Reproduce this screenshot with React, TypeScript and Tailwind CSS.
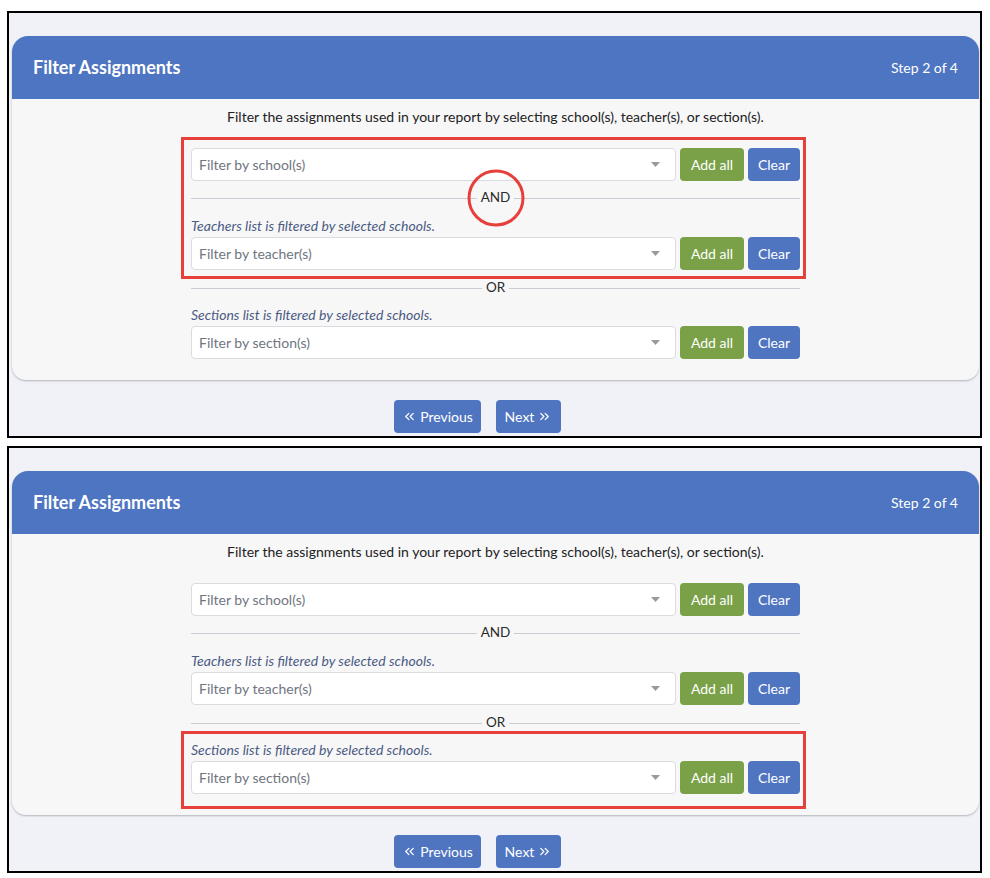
import { ChevronsLeft, ChevronsRight } from 'lucide-react'

const font = { fontFamily: 'Lato, "Noto Sans", sans-serif' }

function Caret() {
  return (
    <svg width="9" height="5" viewBox="0 0 9 5" className="shrink-0">
      <path d="M0 0 L9 0 L4.5 5 Z" fill="#9a9a9a" />
    </svg>
  )
}

function FilterRow({ placeholder }: { placeholder: string }) {
  return (
    <div className="flex items-stretch gap-[4px] h-[33px]">
      <div className="w-[485px] flex items-center justify-between bg-white border border-[#d9dbe0] rounded-[4px] pl-[7px] pr-[15px]">
        <span className="text-[14px] text-[#707580]">{placeholder}</span>
        <Caret />
      </div>
      <button className="w-[64px] rounded-[4px] bg-[#7aa147] text-white text-[14px]">Add all</button>
      <button className="w-[52px] rounded-[4px] bg-[#4f75c1] text-white text-[14px]">Clear</button>
    </div>
  )
}

function Divider({ label, circled }: { label: string; circled?: boolean }) {
  return (
    <div className="relative flex items-center h-[20px]">
      <div className="flex-1 h-px bg-[#c9ccd2]" />
      <span className="px-[4px] text-[13.5px] text-[#2a2a2a] leading-none">{label}</span>
      <div className="flex-1 h-px bg-[#c9ccd2]" />
      {circled && (
        <div className="absolute left-1/2 top-1/2 -translate-x-1/2 -translate-y-1/2 w-[57px] h-[57px] rounded-full border-[3px] border-[#e5403a]" />
      )}
    </div>
  )
}

function Note({ text }: { text: string }) {
  return <div className="h-[18px] leading-[18px] text-[14px] italic text-[#4b5b82]">{text}</div>
}

function Frame({ variant }: { variant: 'top' | 'bottom' }) {
  const top = variant === 'top'
  return (
    <div className="h-[427px] box-border border-2 border-black bg-[#f0f2f7] mx-[7px] w-[975px] pt-[23px] pl-[3px] pr-[1px]">
      <div className="rounded-t-[16px] rounded-b-[14px] bg-[#f7f7f8] shadow-[0_1px_2px_rgba(0,0,0,0.25)] overflow-hidden">
        <div className="h-[63px] bg-[#4e75c1] flex items-center justify-between px-[21px] text-white">
          <span className="text-[18px] font-bold">Filter Assignments</span>
          <span className="text-[14px]">Step 2 of 4</span>
        </div>
        <div className="pt-[8px] pb-[21px]">
          <p className="text-center text-[14px] leading-[20px] text-[#222]">
            Filter the assignments used in your report by selecting school(s), teacher(s), or section(s).
          </p>
          <div className="w-[609px] mx-auto mt-[21px]">
            <div className="relative">
              {top && (
                <div className="absolute -left-[10px] -right-[6px] -top-[11px] -bottom-[9px] border-[3px] border-[#e5403a] pointer-events-none" />
              )}
              <FilterRow placeholder="Filter by school(s)" />
              <div className="mt-[7px]">
                <Divider label="AND" circled={top} />
              </div>
              <div className="mt-[9px]">
                <Note text="Teachers list is filtered by selected schools." />
              </div>
              <div className="mt-[2px]">
                <FilterRow placeholder="Filter by teacher(s)" />
              </div>
            </div>
            <div className="mt-[8px]">
              <Divider label="OR" />
            </div>
            <div className="relative mt-[8px]">
              {!top && (
                <div className="absolute -left-[10px] -right-[6px] -top-[10px] -bottom-[15px] border-[3px] border-[#e5403a] pointer-events-none" />
              )}
              <Note text="Sections list is filtered by selected schools." />
              <div className="mt-[2px]">
                <FilterRow placeholder="Filter by section(s)" />
              </div>
            </div>
          </div>
        </div>
      </div>
      <div className="flex gap-[15px] mt-[20px] pl-[382px]">
        <button className="h-[33px] w-[87px] rounded-[4px] bg-[#4f75c1] text-white text-[14px] flex items-center justify-center gap-[3px]">
          <ChevronsLeft size={15} strokeWidth={2} />
          Previous
        </button>
        <button className="h-[33px] w-[65px] rounded-[4px] bg-[#4f75c1] text-white text-[14px] flex items-center justify-center gap-[3px]">
          Next
          <ChevronsRight size={15} strokeWidth={2} />
        </button>
      </div>
    </div>
  )
}

export default function App() {
  return (
    <div className="w-[990px] h-[878px] bg-white pt-[11px]" style={font}>
      <Frame variant="top" />
      <div className="h-[8px]" />
      <Frame variant="bottom" />
    </div>
  )
}
